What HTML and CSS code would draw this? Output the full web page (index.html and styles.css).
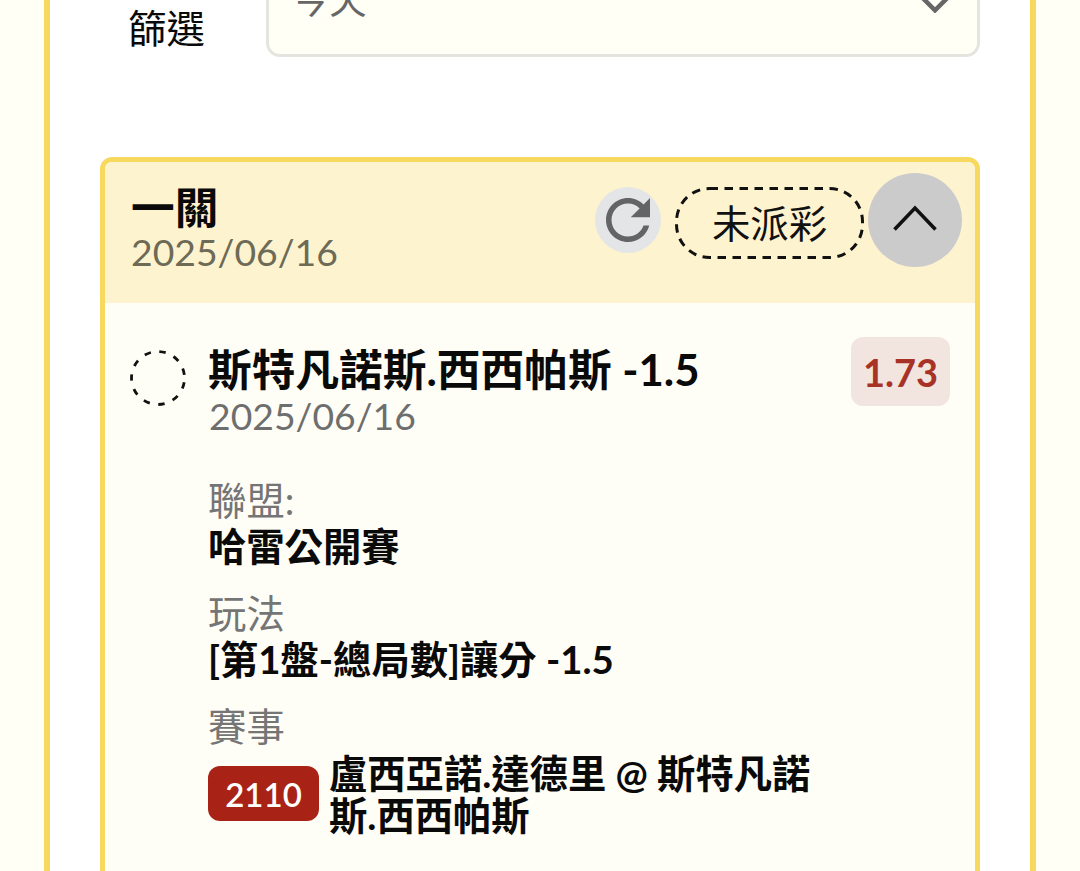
FILE: index.html
```html
<!DOCTYPE html>
<html lang="zh-Hant">
<head>
<meta charset="utf-8">
<title>一關</title>
<link rel="stylesheet" href="styles.css">
</head>
<body>
<main class="panel">
  <div class="filter">
    <span class="filter-label">篩選</span>
    <div class="select">
      <span class="select-value">今天</span>
      <svg class="select-arrow" viewBox="0 0 40 40" aria-hidden="true"><path d="M3 20 L20 37 L37 20" fill="none" stroke="#666" stroke-width="5"/></svg>
    </div>
  </div>
  <section class="card">
    <header class="card-head">
      <div class="head-text">
        <h2 class="head-title">一關</h2>
        <div class="head-date">2025/06/16</div>
      </div>
      <div class="head-actions">
        <span class="refresh">
          <svg viewBox="0 0 24 24" aria-hidden="true"><path fill="#636466" d="M17.65 6.35C16.2 4.9 14.21 4 12 4c-4.42 0-7.99 3.58-7.99 8s3.57 8 7.99 8c3.73 0 6.84-2.55 7.73-6h-2.08c-.82 2.33-3.04 4-5.65 4-3.31 0-6-2.69-6-6s2.69-6 6-6c1.66 0 3.14.69 4.22 1.78L13 11h7V4l-2.35 2.35z"/></svg>
        </span>
        <span class="status">
          <svg class="status-outline" viewBox="0 0 189 72" aria-hidden="true"><rect x="1.5" y="1.5" width="186" height="69" rx="33" fill="none" stroke="#111" stroke-width="3" stroke-dasharray="8.5 6.5"/></svg>
          未派彩
        </span>
        <span class="toggle">
          <svg viewBox="0 0 44 26" aria-hidden="true"><path d="M1.5 24.5 L22 3 L42.5 24.5" fill="none" stroke="#111" stroke-width="3.6"/></svg>
        </span>
      </div>
    </header>
    <div class="card-body">
      <div class="bet-row">
        <svg class="bet-mark" viewBox="0 0 56 56" aria-hidden="true"><circle cx="28" cy="28" r="26.5" fill="none" stroke="#111" stroke-width="2.8" stroke-dasharray="6.5 8.64" stroke-dashoffset="-4.3"/></svg>
        <div class="bet-main">
          <div class="bet-title">斯特凡諾斯.西西帕斯 -1.5</div>
          <div class="bet-date">2025/06/16</div>
        </div>
        <div class="odds">1.73</div>
      </div>
      <dl class="details">
        <dt class="label">聯盟:</dt>
        <dd class="value">哈雷公開賽</dd>
        <dt class="label">玩法</dt>
        <dd class="value">[第1盤-總局數]讓分 -1.5</dd>
        <dt class="label">賽事</dt>
        <dd class="event">
          <span class="event-code">2110</span>
          <span class="event-name">盧西亞諾.達德里 @ 斯特凡諾斯.西西帕斯</span>
        </dd>
      </dl>
    </div>
  </section>
</main>
</body>
</html>
```
FILE: styles.css
```css
* { box-sizing: border-box; }
html, body { margin: 0; height: 871px; overflow: hidden; }
body {
  background: #fffff6;
  font-family: Lato, "Noto Sans CJK TC", sans-serif;
  color: #0a0a0a;
}
.panel {
  margin: 0 44px;
  width: 992px;
  height: 871px;
  overflow: hidden;
  background: #fff;
  border-left: 6px solid #f6d95e;
  border-right: 6px solid #f6d95e;
  padding: 0 50px;
}
.filter {
  display: flex;
  align-items: flex-end;
  height: 57px;
  margin-bottom: 100px;
}
.filter-label {
  font-size: 38.4px;
  line-height: 56px;
  width: 166px;
  padding-left: 28px;
  margin-bottom: 1px;
  flex: none;
}
.select {
  flex: 1;
  height: 120px;
  display: flex;
  align-items: flex-start;
  justify-content: space-between;
  background: #fffff6;
  border: 3px solid #e5e5e0;
  border-radius: 14px;
  padding: 37px 24px 0 23px;
}
.select-value {
  font-size: 37.3px;
  line-height: 44px;
  color: #666;
  margin-top: 1px;
}
.select-arrow { width: 36px; height: 36px; margin-top: 0; }
.card {
  width: 880px;
  border: 5px solid #f6d95e;
  border-radius: 12px;
  background: #fffef6;
  height: 760px;
  overflow: hidden;
}
.card-head {
  height: 141px;
  background: #fdf3cf;
  display: flex;
  justify-content: space-between;
  padding: 11px 13px 0 26px;
}
.head-text { padding-top: 12px; }
.head-title {
  margin: 0;
  font-size: 43.7px;
  font-weight: 700;
  line-height: 45px;
}
.head-date {
  font-size: 37.3px;
  line-height: 44px;
  color: #6d6a55;
}
.head-actions {
  display: flex;
  align-items: flex-start;
}
.refresh {
  width: 66px;
  height: 66px;
  margin-top: 14px;
  margin-right: 14px;
  border-radius: 50%;
  background: #e4e5e6;
  display: flex;
}
.refresh svg { width: 66px; height: 66px; }
.status {
  position: relative;
  width: 189px;
  height: 72px;
  margin-top: 14px;
  margin-right: 4px;
  display: flex;
  align-items: center;
  justify-content: center;
  padding-bottom: 5px;
  font-size: 38.4px;
  color: #111;
}
.status-outline {
  position: absolute;
  inset: 0;
  width: 189px;
  height: 72px;
}
.toggle {
  width: 94px;
  height: 94px;
  border-radius: 50%;
  background: #cbcbcb;
  display: flex;
  align-items: center;
  justify-content: center;
}
.toggle svg { width: 44px; height: 26px; margin-bottom: 4px; }
.card-body { padding: 34px 25px 0 25px; }
.bet-row {
  display: flex;
  align-items: flex-start;
}
.bet-mark {
  width: 56px;
  height: 56px;
  flex: none;
  margin-top: 13px;
  margin-right: 22px;
}
.bet-main { flex: 1; }
.bet-title {
  font-size: 43.7px;
  font-weight: 700;
  line-height: 46px;
  margin-top: 9px;
}
.bet-date {
  font-size: 37.3px;
  line-height: 44px;
  margin-top: 2px;
  margin-left: 1px;
  color: #6e6e6e;
}
.odds {
  width: 99px;
  height: 69px;
  background: #f2e5df;
  color: #a93226;
  border-radius: 12px;
  font-size: 38px;
  font-weight: 700;
  display: flex;
  align-items: center;
  justify-content: center;
  flex: none;
}
.details { margin: 40px 0 0 78px; }
.label {
  font-size: 38.4px;
  line-height: 45px;
  color: #757575;
}
.value {
  margin: 0 0 22px;
  font-size: 38.3px;
  font-weight: 700;
  line-height: 46px;
}
.event {
  margin: 3px 0 0;
  display: flex;
  align-items: flex-start;
  width: 610px;
}
.event-code {
  flex: none;
  width: 111px;
  height: 55px;
  margin-top: 14px;
  margin-right: 10px;
  border-radius: 12px;
  background: #a82316;
  color: #fff;
  font-size: 33px;
  font-weight: 600;
  display: flex;
  align-items: center;
  justify-content: center;
}
.event-name {
  font-size: 38.3px;
  font-weight: 700;
  line-height: 42px;
}
```
